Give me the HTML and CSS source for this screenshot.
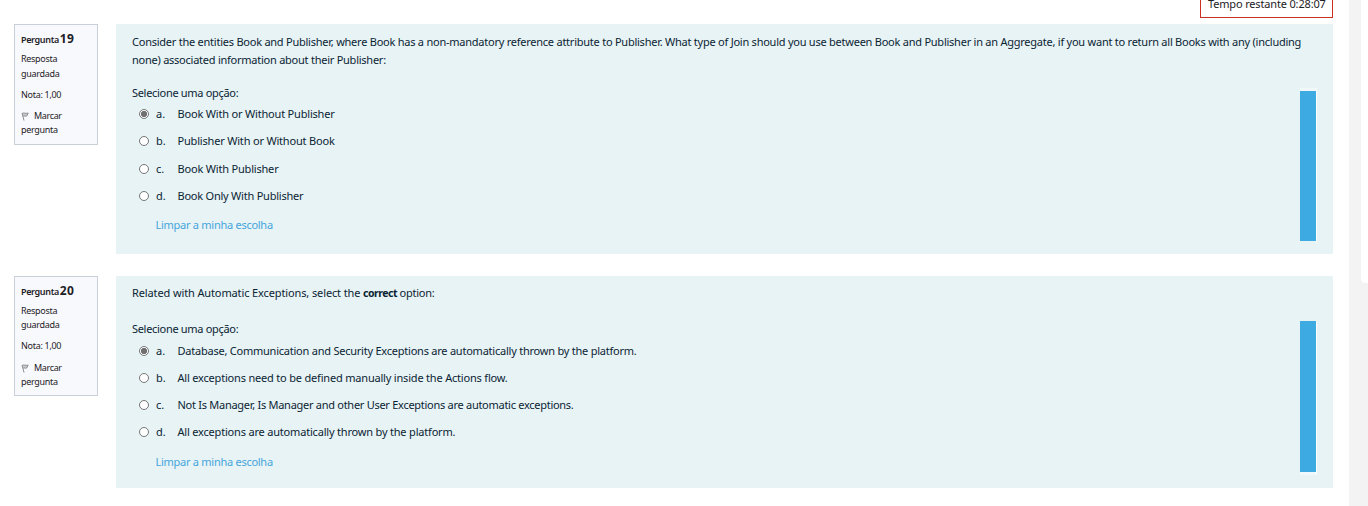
FILE: index.html
```html
<!DOCTYPE html>
<html lang="pt">
<head>
<meta charset="utf-8">
<title>Questionário</title>
<link rel="stylesheet" href="styles.css">
</head>
<body>
<div class="page">
  <div class="timer"><span>Tempo restante 0:28:07</span></div>
  <main class="quiz">
    <section class="question first">
      <aside class="info">
        <h3>Pergunta <b>19</b></h3>
        <p class="state">Resposta<br>guardada</p>
        <p class="grade">Nota: 1,00</p>
        <p class="flag"><svg width="8" height="9" viewBox="0 0 8 9"><path d="M1 1 L3 8.5 M1.2 1.4 C3 .3 4.5 2 7.2 1 L5.7 4 C4.5 4.6 3.5 3.5 2.2 4.2" fill="#c9cccd" stroke="#8b8e8f"/></svg><span>Marcar</span><br>pergunta</p>
      </aside>
      <div class="content">
        <div class="formulation">
          <p class="text"><span class="l1">Consider the entities Book and Publisher, where Book has a non-mandatory reference attribute to Publisher. What type of Join should you use between Book and Publisher in an Aggregate, if you want to return all Books with any (including</span><br><span class="l2">none) associated information about their Publisher:</span></p>
          <p class="prompt">Selecione uma opção:</p>
          <div class="answers">
            <label><i class="radio on"></i><span class="num">a.</span><span class="a1">Book With or Without Publisher</span></label>
            <label><i class="radio"></i><span class="num">b.</span><span class="a2">Publisher With or Without Book</span></label>
            <label><i class="radio"></i><span class="num">c.</span><span class="a3">Book With Publisher</span></label>
            <label><i class="radio"></i><span class="num">d.</span><span class="a4">Book Only With Publisher</span></label>
          </div>
          <a class="clear">Limpar a minha escolha</a>
        </div>
        <div class="bar"></div>
      </div>
    </section>
    <section class="question second">
      <aside class="info">
        <h3>Pergunta <b>20</b></h3>
        <p class="state">Resposta<br>guardada</p>
        <p class="grade">Nota: 1,00</p>
        <p class="flag"><svg width="8" height="9" viewBox="0 0 8 9"><path d="M1 1 L3 8.5 M1.2 1.4 C3 .3 4.5 2 7.2 1 L5.7 4 C4.5 4.6 3.5 3.5 2.2 4.2" fill="#c9cccd" stroke="#8b8e8f"/></svg><span>Marcar</span><br>pergunta</p>
      </aside>
      <div class="content">
        <div class="formulation">
          <p class="text"><span class="l3">Related with Automatic Exceptions, select the </span><strong>correct</strong><span class="l4"> option:</span></p>
          <p class="prompt">Selecione uma opção:</p>
          <div class="answers">
            <label><i class="radio on"></i><span class="num">a.</span><span class="a5">Database, Communication and Security Exceptions are automatically thrown by the platform.</span></label>
            <label><i class="radio"></i><span class="num">b.</span><span class="a6">All exceptions need to be defined manually inside the Actions flow.</span></label>
            <label><i class="radio"></i><span class="num">c.</span><span class="a7">Not Is Manager, Is Manager and other User Exceptions are automatic exceptions.</span></label>
            <label><i class="radio"></i><span class="num">d.</span><span class="a8">All exceptions are automatically thrown by the platform.</span></label>
          </div>
          <a class="clear">Limpar a minha escolha</a>
        </div>
        <div class="bar"></div>
      </div>
    </section>
  </main>
  <div class="drawer"><div class="block"></div></div>
</div>
</body>
</html>
```
FILE: styles.css
```css
* { box-sizing: border-box; }
body { margin: 0; background: #fff; color: #0b2433; font: 11px/18px "Noto Sans", "Open Sans", sans-serif; }
p, h3 { margin: 0; }
.page { position: relative; display: flex; height: 506px; overflow: hidden; }
.timer { position: absolute; left: 1200px; top: -10px; width: 133px; height: 28px; border: 1px solid #ca3120; padding: 4px 0 0 7px; white-space: nowrap; color: #1d2125; letter-spacing: -.16px; }
.quiz { width: 1349px; padding: 24px 16px 0 14px; }
.question { display: flex; gap: 18px; align-items: flex-start; }
.first { height: 252px; }
.info { width: 84px; height: 121px; border: 1px solid #cad0d7; background: #f8f9fd; padding: 5px 6px; font-size: 9px; line-height: 14.3px; color: #1d2125; white-space: nowrap; letter-spacing: -.3px; }
.second .info { height: 120px; }
.info h3 { font-size: 9px; font-weight: 600; line-height: 18px; height: 21px; letter-spacing: -.35px; }
.info h3 b { font-size: 12px; font-weight: 700; margin-left: -1px; letter-spacing: .2px; }
.info .state { padding-top: 1px; height: 36px; }
.first .info .state { padding-top: 0; line-height: 15px; height: 37px; }
.info .grade { height: 21px; }
.second .info .grade { height: 22px; }
.flag svg { margin-right: 5px; vertical-align: -2px; }
.flag span { letter-spacing: -.35px; }
.content { width: 1217px; background: #e7f3f5; display: flex; justify-content: space-between; }
.first .content { height: 230px; padding: 9px 16px 0; }
.second .content { height: 212px; padding: 8px 16px 0; }
.formulation { width: 1168px; white-space: nowrap; }
.first .text { margin-bottom: 15px; }
.second .text { margin-bottom: 18px; }
.l1 { letter-spacing: -.24px; }
.l2 { letter-spacing: -.245px; }
.l3 { letter-spacing: -.12px; }
.l4 { letter-spacing: -.25px; }
strong { letter-spacing: -.5px; font-size: 10.5px; }
.prompt { letter-spacing: -.31px; }
.answers { margin-top: -1px; padding-left: 7px; }
.first .answers { margin-top: -1.4px; }
.answers label { display: flex; align-items: center; height: 27.2px; }
.radio { width: 10px; height: 10px; border: 1px solid #767676; border-radius: 50%; background: #fff; }
.radio.on { background: radial-gradient(circle, #707070 0 2.8px, #fff 3.4px); }
.num { width: 21.5px; margin-left: 7px; }
.a1, .a2, .a3 { letter-spacing: -.19px; }
.a4 { letter-spacing: -.23px; }
.a5 { letter-spacing: -.23px; }
.a6, .a8 { letter-spacing: -.19px; }
.a7 { letter-spacing: -.275px; }
.clear { display: block; margin: 7px 0 0 23.5px; color: #46a5dc; letter-spacing: -.27px; }
.bar { width: 17px; border-right: 1px solid #fff; background: #3daae2; }
.first .bar { height: 156px; margin-top: 55px; border-top: 3px solid #f1f8fb; border-bottom: 3px solid #e7f3f5; }
.second .bar { height: 154px; margin-top: 37px; border-bottom: 3px solid #eff8fc; }
.drawer { width: 19px; padding-left: 12px; background: #f3f3f3; }
.block { height: 283px; background: #fff; border-bottom-left-radius: 4px; }
```
